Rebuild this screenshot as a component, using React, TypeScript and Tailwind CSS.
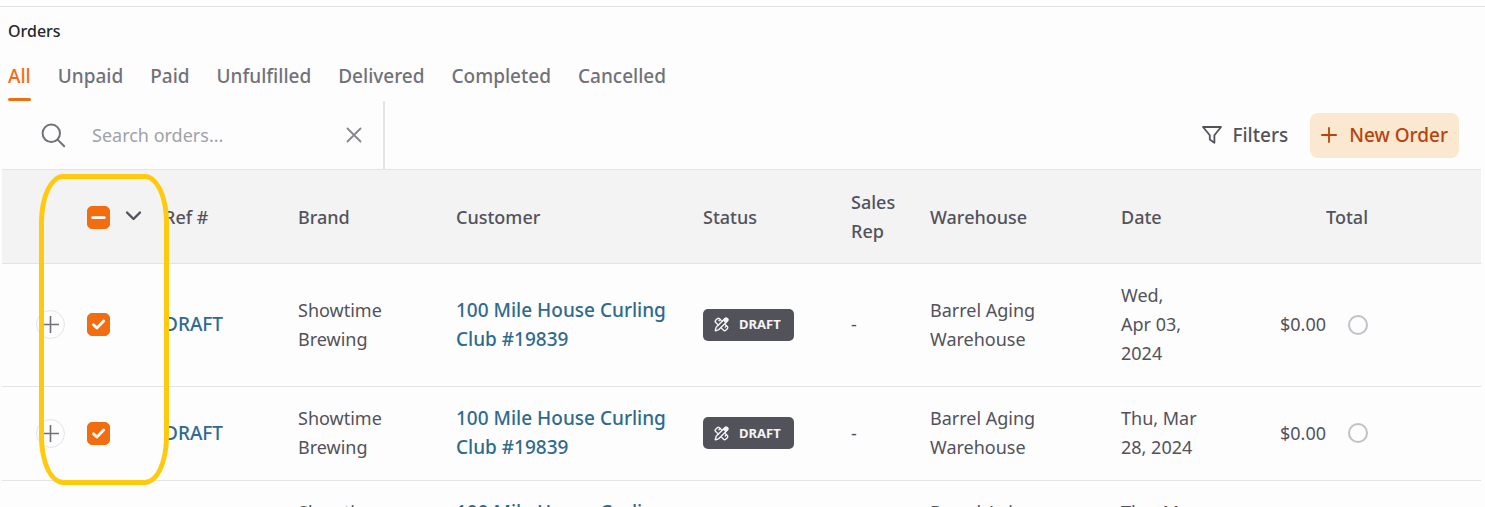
import { useEffect, useRef, useState } from 'react';
import { PencilRuler } from 'lucide-react';

const TABS = ['All', 'Unpaid', 'Paid', 'Unfulfilled', 'Delivered', 'Completed', 'Cancelled'];

interface Order {
  id: number;
  ref: string;
  brand: string;
  customer: string;
  status: string;
  rep: string;
  warehouse: string;
  date: string;
  total: string;
}

const draft = {
  ref: 'DRAFT',
  brand: 'Showtime\nBrewing',
  customer: '100 Mile House Curling\nClub #19839',
  status: 'DRAFT',
  rep: '-',
  warehouse: 'Barrel Aging\nWarehouse',
  total: '$0.00',
};

const ORDERS: Order[] = [
  { id: 1, ...draft, date: 'Wed,\nApr 03,\n2024' },
  { id: 2, ...draft, date: 'Thu, Mar\n28, 2024' },
  { id: 3, ...draft, date: 'Thu, Mar\n28, 2024' },
];

function App() {
  const [tab, setTab] = useState('All');
  const [query, setQuery] = useState('');
  const [selected, setSelected] = useState<number[]>([1, 2]);

  const toggle = (id: number) =>
    setSelected((ids) => (ids.includes(id) ? ids.filter((i) => i !== id) : [...ids, id]));

  return (
    <div className="h-screen overflow-hidden bg-[#fdfdfd] pt-[6px] font-['Noto_Sans','Open_Sans',sans-serif] text-[18px] leading-[29px] text-[#52525b]">
      <header className="border-t border-[#e4e4e7] px-2 pt-3">
        <h1 className="text-[16px] leading-6 font-medium text-[#27272a]">Orders</h1>
        <nav className="mt-[19px] flex gap-[27px] text-[19px]">
          {TABS.map((name) => (
            <button
              key={name}
              type="button"
              onClick={() => setTab(name)}
              className={`flex h-[39px] flex-col justify-between font-medium ${
                tab === name ? 'text-[#f26d0f]' : 'text-[#71717a]'
              }`}
            >
              {name}
              {tab === name && <span className="h-[3px] w-full rounded-full bg-[#f26d0f]" />}
            </button>
          ))}
        </nav>
      </header>

      <div className="flex h-[68px] items-center justify-between pr-[26px]">
        <div className="flex h-full w-[385px] items-center border-r-2 border-[#e4e4e7] pr-[21px] pl-[41px]">
          <label htmlFor="search" aria-label="Search orders">
            <SearchIcon />
          </label>
          <input
            id="search"
            value={query}
            onChange={(e) => setQuery(e.target.value)}
            placeholder="Search orders..."
            className="ml-[26px] min-w-0 flex-1 bg-transparent outline-none placeholder:text-[#a1a1aa]"
          />
          <button type="button" aria-label="Clear search" onClick={() => setQuery('')}>
            <svg className="size-4" viewBox="0 0 16 16" fill="none" stroke="#85858d" strokeWidth="1.8" strokeLinecap="round">
              <path d="M1.5 1.5l13 13M14.5 1.5l-13 13" />
            </svg>
          </button>
        </div>
        <div className="flex items-center gap-[22px] text-[19px]">
          <button type="button" className="flex items-center gap-[10px] font-medium">
            <svg className="h-[18px] w-5" viewBox="0 0 20 18" fill="none" stroke="currentColor" strokeWidth="1.8" strokeLinejoin="round">
              <path d="M1 1h18l-6.6 8.2v7.6l-4.6-3.2V9.2z" />
            </svg>
            Filters
          </button>
          <button
            type="button"
            className="flex h-[45px] items-center gap-3 rounded-lg bg-[#fbe8d0] px-[11px] font-medium text-[#b8430f]"
          >
            <svg className="size-4" viewBox="0 0 16 16" fill="none" stroke="currentColor" strokeWidth="1.8" strokeLinecap="round">
              <path d="M8 .9v14.2M.9 8h14.2" />
            </svg>
            New Order
          </button>
        </div>
      </div>

      <div className="relative pr-1 pl-[2px]">
        <table className="w-full table-fixed border-collapse text-left whitespace-pre-line">
          <colgroup>
            <col className="w-[83px]" />
            <col className="w-[79px]" />
            <col className="w-[134px]" />
            <col className="w-[158px]" />
            <col className="w-[247px]" />
            <col className="w-[148px]" />
            <col className="w-[79px]" />
            <col className="w-[191px]" />
            <col className="w-[120px]" />
            <col className="w-[127px]" />
            <col />
          </colgroup>
          <thead>
            <tr className="border-y border-[#e4e4e7] bg-[#f3f3f3] [&>th]:pt-[18px] [&>th]:pb-[17px] [&>th]:font-medium">
              <th />
              <th>
                <div className="flex items-center gap-[15px] pl-[2px]">
                  <Checkbox
                    label="Select all orders"
                    checked={selected.length === ORDERS.length}
                    indeterminate={selected.length > 0 && selected.length < ORDERS.length}
                    onChange={() => setSelected(selected.length ? [] : ORDERS.map((o) => o.id))}
                  />
                  <button type="button" aria-label="Selection options">
                    <svg className="h-4 w-[17px]" viewBox="0 0 17 16" fill="none" stroke="currentColor" strokeWidth="2.4" strokeLinecap="round" strokeLinejoin="round">
                      <path d="M2 3.5l6.5 6.5L15 3.5" />
                    </svg>
                  </button>
                </div>
              </th>
              <th>Ref #</th>
              <th>Brand</th>
              <th>Customer</th>
              <th>Status</th>
              <th>{'Sales\nRep'}</th>
              <th>Warehouse</th>
              <th>Date</th>
              <th className="text-right">Total</th>
              <th />
            </tr>
          </thead>
          <tbody>
            {ORDERS.map((order) => (
              <tr key={order.id} className="border-b border-[#e4e4e7] [&>td]:pt-[17px] [&>td]:pb-[18px]">
                <td>
                  <button
                    type="button"
                    aria-label="Expand order"
                    className="ml-[34px] flex size-[29px] items-center justify-center rounded-full border border-[#e4e4e7] text-[#71717a]"
                  >
                    <svg className="size-[17px]" viewBox="0 0 17 17" fill="none" stroke="currentColor" strokeWidth="1.6">
                      <path d="M8.5 0v17M0 8.5h17" />
                    </svg>
                  </button>
                </td>
                <td>
                  <div className="flex pl-[2px]">
                    <Checkbox
                      label={`Select order ${order.id}`}
                      checked={selected.includes(order.id)}
                      onChange={() => toggle(order.id)}
                    />
                  </div>
                </td>
                <td>
                  <a href="#order" className="text-[19px] font-medium text-[#2f6a8f]">{order.ref}</a>
                </td>
                <td>{order.brand}</td>
                <td>
                  <a href="#customer" className="text-[19px] font-medium text-[#2f6a8f]">{order.customer}</a>
                </td>
                <td>
                  <span className="flex h-8 w-[91px] items-center gap-[10px] rounded-[5px] bg-[#52525b] pl-[11px] text-[13px] font-bold text-[#f4f4f5]">
                    <svg className="size-[15px]" viewBox="0 0 24 24" fill="none">
                      <PencilRuler size={24} strokeWidth={2.2} />
                      <circle cx="19.5" cy="4.5" r="3.8" fill="currentColor" />
                    </svg>
                    {order.status}
                  </span>
                </td>
                <td>{order.rep}</td>
                <td>{order.warehouse}</td>
                <td>{order.date}</td>
                <td>
                  <span className="flex items-center justify-end gap-[22px]">
                    {order.total}
                    <span className="size-5 rounded-full border-2 border-[#c0c0c6]" />
                  </span>
                </td>
                <td />
              </tr>
            ))}
          </tbody>
        </table>

        {/* callout round the selection column */}
        <div className="pointer-events-none absolute top-[5px] left-[39px] h-[311px] w-[130px] rounded-[24px/48px] border-5 border-[#ffc90e]" />
      </div>
    </div>
  );
}

function Checkbox({
  label,
  checked,
  indeterminate = false,
  onChange,
}: {
  label: string;
  checked: boolean;
  indeterminate?: boolean;
  onChange: () => void;
}) {
  const ref = useRef<HTMLInputElement>(null);

  useEffect(() => {
    if (ref.current) ref.current.indeterminate = indeterminate;
  }, [indeterminate]);

  return (
    <label className="relative block size-[23px]">
      <input
        ref={ref}
        type="checkbox"
        aria-label={label}
        checked={checked}
        onChange={onChange}
        className="block size-[23px] appearance-none rounded-[5px] border border-[#a1a1aa] checked:border-[#f26d0f] checked:bg-[#f26d0f] indeterminate:border-[#f26d0f] indeterminate:bg-[#f26d0f]"
      />
      {(checked || indeterminate) && (
        <svg
          className="pointer-events-none absolute inset-0 size-[23px]"
          viewBox="0 0 23 23"
          fill="none"
          stroke="#fff"
          strokeWidth="2.8"
          strokeLinecap="round"
          strokeLinejoin="round"
        >
          <path d={indeterminate ? 'M5.7 11.7h11.6' : 'M6.5 11.8l3.4 3.3 6.8-7.1'} />
        </svg>
      )}
    </label>
  );
}

function SearchIcon() {
  return (
    <svg className="size-[25px]" viewBox="0 0 25 25" fill="none" stroke="#71717a" strokeWidth="2" strokeLinecap="round">
      <circle cx="10.3" cy="10.3" r="8.7" />
      <path d="M16.6 16.6l6.6 6.6" />
    </svg>
  );
}

export default App;
